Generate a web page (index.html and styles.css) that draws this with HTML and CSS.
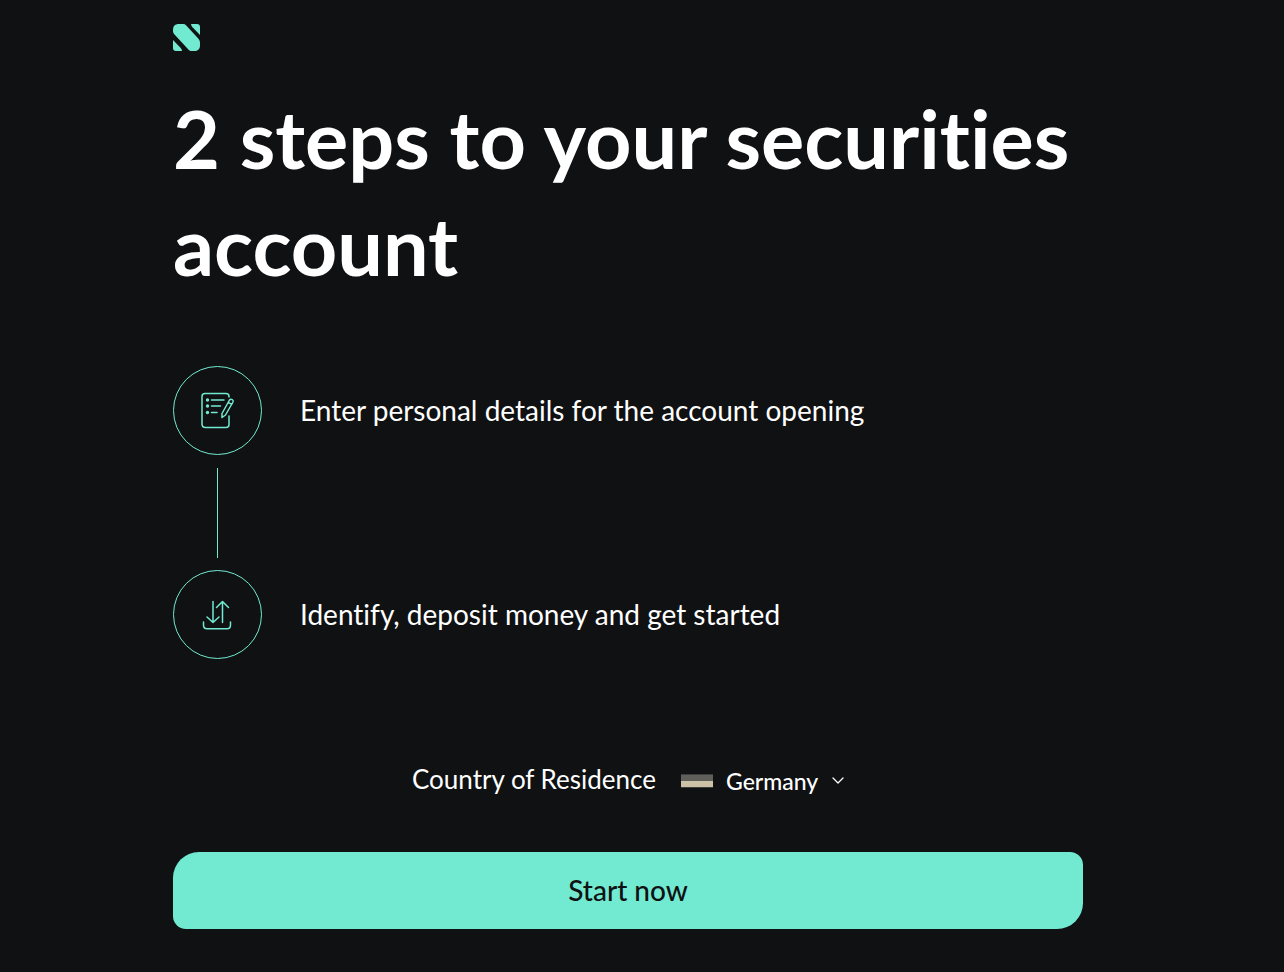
FILE: index.html
```html
<!DOCTYPE html>
<html lang="en">
<head>
<meta charset="utf-8">
<meta name="viewport" content="width=device-width, initial-scale=1">
<title>Securities account</title>
<link rel="stylesheet" href="styles.css">
</head>

<body>

<div class="page">

	<header class="header">
		<a class="logo" href="#" aria-label="Home">
			<svg width="28" height="28" viewBox="0 0 28 28" fill="currentColor" aria-hidden="true">
				<path d="M6 0H10.500C11.500 0 12.200 .4 13 1.200L24.800 14C26.300 15.600 27 17 27 19V21C27 25 25 27 21 27H18.500C17.400 27 16.500 26.700 15.600 25.800L2 11C.6 9.500 0 8.500 0 7V6C0 2 2 0 6 0Z"/>
				<path d="M18 0H24Q27 0 27 3V11L19.500 3.300Q18.200 1.900 18 0Z"/>
				<path d="M0 16L7.500 23.700Q8.900 25.100 9 27H3Q0 27 0 24Z"/>
			</svg>
		</a>
	</header>

	<main>
		<h1 class="title">2 steps to your securities account</h1>

		<ol class="steps">
			<li class="step">
				<span class="step-icon">
					<svg width="36" height="38" viewBox="0 0 36 38" fill="none" stroke="currentColor" stroke-width="1.500" stroke-linecap="round" stroke-linejoin="round" aria-hidden="true">
						<path d="M29 5V4.500C29 2.500 28 1.500 26 1.500H5C3 1.500 2 2.500 2 4.500V32C2 34.500 3 35.500 5.500 35.500H26C28 35.500 29 34.500 29 32.500V24"/>
						<path d="M11.500 8H24M11.500 14H20.500M11.500 20.500H17"/>
						<path d="M22 21.500L29.500 8C31 6.500 34 8 33 10L25.500 23L22 25.500ZM28.300 10.300L31.800 12.300"/>
						<g fill="currentColor" stroke="none">
							<circle cx="7.500" cy="8" r="1.700"/>
							<circle cx="7.500" cy="14" r="1.700"/>
							<circle cx="7.500" cy="20.500" r="1.700"/>
						</g>
					</svg>
				</span>
				<span class="step-text">Enter personal details for the account opening</span>
			</li>
			<li class="step-line"></li>
			<li class="step">
				<span class="step-icon">
					<svg width="36" height="38" viewBox="0 0 36 38" fill="none" stroke="currentColor" stroke-width="1.500" stroke-linecap="round" stroke-linejoin="round" aria-hidden="true">
						<path d="M13 5.500V26.500M7 21L13 26.500L19 21"/>
						<path d="M22.500 26.500V5.500M16.500 11.500L22.500 5.500L28.500 11.500"/>
						<path d="M3.500 26V29C3.500 31.500 4.500 32.800 7 32.800H27C29.500 32.800 30.500 31.500 30.500 29V26"/>
					</svg>
				</span>
				<span class="step-text">Identify, deposit money and get started</span>
			</li>
		</ol>

		<form class="form">
			<div class="residence">
				<label for="country">Country of Residence</label>
				<div class="country">
					<span class="flag"></span>
					<select id="country" name="country">
						<option>Germany</option>
					</select>
					<svg width="12" height="8" viewBox="0 0 12 8" fill="none" stroke="currentColor" stroke-width="1.300" stroke-linecap="round" stroke-linejoin="round" aria-hidden="true">
						<path d="M1 1L6 6L11 1"/>
					</svg>
				</div>
			</div>
			<button class="start" type="submit">Start now</button>
		</form>
	</main>

</div><!-- end page -->

</body>
</html>
```

FILE: styles.css
```css
* {
	margin: 0;
	padding: 0;
	box-sizing: border-box;
}

body {
	background: #101113;
	color: #fff;
	font-family: Lato, "Noto Sans", sans-serif;
	font-size: 28px;
	font-variant-ligatures: none;
	line-height: 36px;
}

.page {
	padding: 24px 201px 40px 173px;
}

.logo {
	display: block;
	width: 28px;
	height: 28px;
	color: #72ead1;
}

.logo svg {
	display: block;
}

.title {
	margin-top: 32px;
	font-size: 81px;
	font-weight: bold;
	line-height: 107px;
}

.steps {
	margin-top: 68px;
	list-style: none;
}

.step {
	display: flex;
	align-items: center;
	gap: 38px;
}

.step-icon {
	display: flex;
	flex: none;
	align-items: center;
	justify-content: center;
	width: 89px;
	height: 89px;
	border: 1px solid #72ead1;
	border-radius: 50%;
	color: #72ead1;
}

.step-text {
	padding-bottom: 2px;
}

.step-line {
	width: 1px;
	height: 90px;
	margin: 13px 44px 12px;
	background: #72ead1;
}

.residence {
	display: flex;
	align-items: center;
	justify-content: center;
	gap: 25px;
	margin-top: 102px;
	font-size: 26px;
}

.country {
	display: flex;
	align-items: center;
	gap: 13px;
	padding-top: 4px;
}

.flag {
	width: 32px;
	height: 14px;
	border: solid #3c3d3c;
	border-width: 1px 0;
	background: linear-gradient(#5f5e5b 50%, #cbc2a8 50%);
}

.country select {
	appearance: none;
	border: 0;
	background: transparent;
	color: #fff;
	font-family: inherit;
	font-size: 23px;
	font-weight: 500;
}

.start {
	display: block;
	width: 100%;
	height: 77px;
	margin-top: 55px;
	padding-bottom: 2px;
	border: 0;
	border-radius: 26px 13px;
	background: #72ead1;
	color: #101113;
	font-family: inherit;
	font-size: 28px;
	font-weight: 500;
	cursor: pointer;
}
```
